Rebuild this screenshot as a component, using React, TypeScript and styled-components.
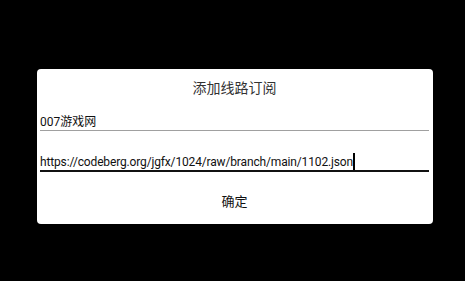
import React from "react";
import styled, { createGlobalStyle } from "styled-components";

const Global = createGlobalStyle`
  html, body { margin: 0; padding: 0; background: #000; }
  body { font-family: Roboto, "Noto Sans CJK SC", sans-serif; }
`;

const Screen = styled.div`
  width: 465px;
  height: 281px;
  background: #000;
  box-sizing: border-box;
  padding: 69px 32px 0 37px;
`;

const Dialog = styled.div`
  width: 396px;
  height: 155px;
  background: #fff;
  border-radius: 4px;
  box-sizing: border-box;
  padding: 0 4px 0 3px;
  display: flex;
  flex-direction: column;
`;

const Title = styled.div`
  height: 38px;
  line-height: 38px;
  text-align: center;
  font-size: 14px;
  color: #333;
`;

const Field = styled.div<{ $active?: boolean; $gap: number; $tight?: boolean }>`
  margin-top: ${(p) => p.$gap}px;
  height: 16px;
  line-height: 16px;
  font-size: 12px;
  letter-spacing: ${(p) => (p.$tight ? "-0.15px" : "0")};
  color: #111;
  white-space: nowrap;
  display: flex;
  align-items: center;
  border-bottom: ${(p) => (p.$active ? "2px solid #111" : "1px solid #a0a0a0")};
`;

const Cursor = styled.span`
  display: inline-block;
  width: 2px;
  height: 17px;
  background: #000;
  margin-top: -2px;
`;

const Button = styled.div`
  margin-top: 10px;
  height: 40px;
  line-height: 40px;
  text-align: center;
  font-size: 13px;
  color: #111;
`;

export default function App() {
  return (
    <>
      <Global />
      <Screen>
        <Dialog>
          <Title>添加线路订阅</Title>
          <Field $gap={7}>007游戏网</Field>
          <Field $gap={23} $active $tight>
            https://codeberg.org/jgfx/1024/raw/branch/main/1102.json
            <Cursor />
          </Field>
          <Button>确定</Button>
        </Dialog>
      </Screen>
    </>
  );
}
